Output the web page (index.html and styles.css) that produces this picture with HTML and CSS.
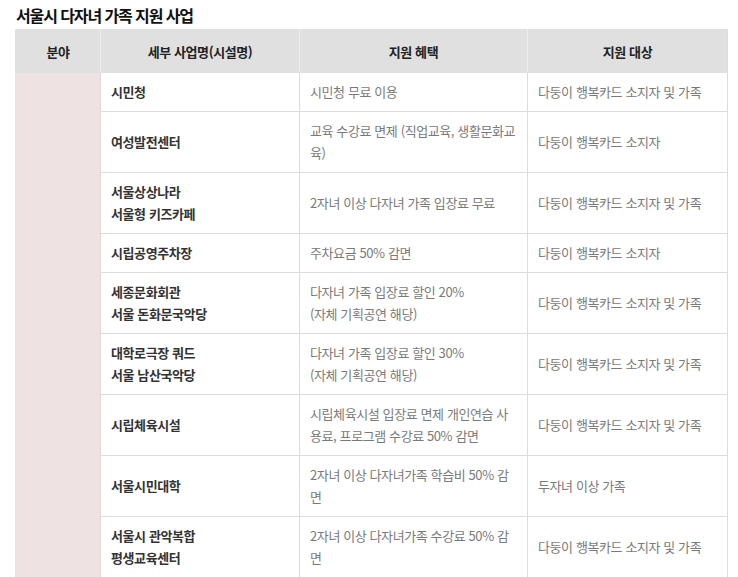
FILE: index.html
```html
<!DOCTYPE html>
<html lang="ko">
<head>
<meta charset="utf-8">
<link rel="stylesheet" href="styles.css">
</head>
<body>
<h3 class="title">서울시 다자녀 가족 지원 사업</h3>
<table class="tbl">
  <colgroup>
    <col class="c1"><col class="c2"><col class="c3"><col class="c4">
  </colgroup>
  <thead>
    <tr><th>분야</th><th>세부 사업명(시설명)</th><th>지원 혜택</th><th>지원 대상</th></tr>
  </thead>
  <tbody>
    <tr><td class="cat" rowspan="9"></td><td class="name">시민청</td><td>시민청 무료 이용</td><td>다둥이 행복카드 소지자 및 가족</td></tr>
    <tr><td class="name">여성발전센터</td><td>교육 수강료 면제 (직업교육, 생활문화교육)</td><td>다둥이 행복카드 소지자</td></tr>
    <tr><td class="name">서울상상나라<br>서울형 키즈카페</td><td>2자녀 이상 다자녀 가족 입장료 무료</td><td>다둥이 행복카드 소지자 및 가족</td></tr>
    <tr><td class="name">시립공영주차장</td><td>주차요금 50% 감면</td><td>다둥이 행복카드 소지자</td></tr>
    <tr><td class="name">세종문화회관<br>서울 돈화문국악당</td><td>다자녀 가족 입장료 할인 20%<br>(자체 기획공연 해당)</td><td>다둥이 행복카드 소지자 및 가족</td></tr>
    <tr><td class="name">대학로극장 쿼드<br>서울 남산국악당</td><td>다자녀 가족 입장료 할인 30%<br>(자체 기획공연 해당)</td><td>다둥이 행복카드 소지자 및 가족</td></tr>
    <tr><td class="name">시립체육시설</td><td>시립체육시설 입장료 면제 개인연습 사용료, 프로그램 수강료 50% 감면</td><td>다둥이 행복카드 소지자 및 가족</td></tr>
    <tr><td class="name">서울시민대학</td><td>2자녀 이상 다자녀가족 학습비 50% 감면</td><td>두자녀 이상 가족</td></tr>
    <tr><td class="name">서울시 관악복합<br>평생교육센터</td><td>2자녀 이상 다자녀가족 수강료 50% 감면</td><td>다둥이 행복카드 소지자 및 가족</td></tr>
  </tbody>
</table>
</body>
</html>
```
FILE: styles.css
```css
html, body {
  margin: 0;
  padding: 0;
  background: #fff;
}
body {
  padding: 0 11px 0 15px;
  font-family: "Noto Sans CJK KR", "Noto Sans", sans-serif;
}
.title {
  margin: 0;
  padding: 3px 0 0 1px;
  height: 26px;
  line-height: 24px;
  font-size: 16px;
  font-weight: 700;
  letter-spacing: -1.1px;
  color: #111;
}
.tbl {
  width: 712px;
  border-collapse: collapse;
  table-layout: fixed;
  font-size: 13px;
  letter-spacing: -0.4px;
}
.c1 { width: 85px; }
.c2 { width: 199px; }
.c3 { width: 228px; }
.c4 { width: 200px; }
.tbl th {
  height: 43px;
  padding: 0 10px;
  background: #e0e0e0;
  border: 1px solid #e0e0e0;
  border-right-color: #ececec;
  font-weight: 700;
  color: #222;
  text-align: center;
  vertical-align: middle;
  box-sizing: border-box;
}
.tbl th:last-child { border-right-color: #dcdcdc; }
.tbl td {
  padding: 8px 10px;
  line-height: 22px;
  border: 1px solid #dcdcdc;
  color: #7a7a7a;
  vertical-align: middle;
  text-align: left;
}
.tbl td.cat {
  background: #efe2e2;
  border-top-color: #efe2e2;
  border-left-color: #efe2e2;
}
.tbl td.name {
  font-weight: 700;
  color: #333;
}
```
